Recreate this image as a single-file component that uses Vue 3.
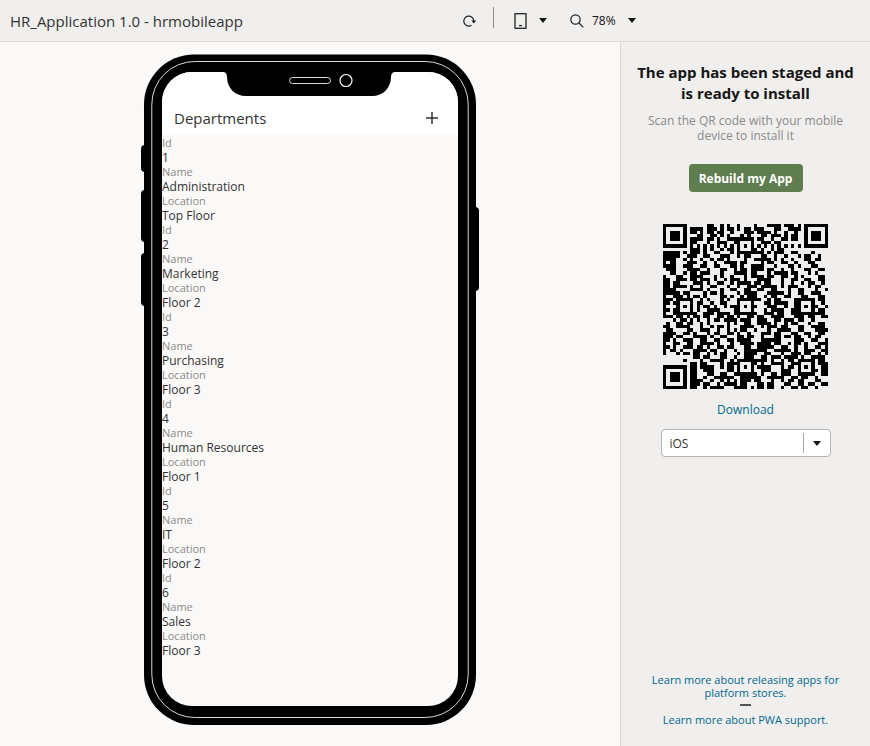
<script setup>
import { ref } from 'vue'

const departments = [
  { id: 1, name: 'Administration', location: 'Top Floor' },
  { id: 2, name: 'Marketing', location: 'Floor 2' },
  { id: 3, name: 'Purchasing', location: 'Floor 3' },
  { id: 4, name: 'Human Resources', location: 'Floor 1' },
  { id: 5, name: 'IT', location: 'Floor 2' },
  { id: 6, name: 'Sales', location: 'Floor 3' },
]

const platform = ref('iOS')

// Modules of the QR code; finder, timing and alignment patterns are added below.
const size = 49
const rows = [
  '.............##..#.#..#....#...####.###.#........',
  '........####.###.#.##.#.##.###...##..####........',
  '........##.#.##.##..#...###.####.#..#..#.........',
  '..........##..##.#.#...#.#...##.###.#.##.........',
  '........####.##.#..####..##.##..#..##.##.........',
  '........##...#..###..#.####..###.##..............',
  '.................................................',
  '........###.#.#..#.##..#.###.#..#.##.............',
  '#####...###.#..##...#.##..####.#.###..##....#....',
  '#####..###..##...###..#.##...##..#..#...#.##..#..',
  '####....#..#..#.##.#....#..#####.#.#..#...##.##..',
  '#.##...###..#..#..####.##....#.##..##..#...##....',
  '####...##..##..##...##.#..####...#...##.#...##...',
  '.###...####..#...##..#.##.####.##..#..#...##..##.',
  '..##....##.###...#...####.##...#.####.##...#.#...',
  '#...##..####...#.#..#...#.####.##..##..#.#....##.',
  '##..##..##.###.#..#.###.#...####...#..##..##..##.',
  '##.##.#..###.#..##..#.####.##.##...#..#..#.##..#.',
  '##.####.#..#..##...#..#..###.#####.#.###...#.##..',
  '####....####.#...#..##..##..##..##...#..##...#..#',
  '#####.##....#.##.#....#.####...#####.#..##..###..',
  '#..#####.##.#....##.#..#.###..#.##..##...##...##.',
  '###.#####..#.#...#.#..#######..#.##....######.##.',
  '##.######.##..#..##...####....##.####..######..#.',
  '#...#.###.#.##.#..#.###...##...###..#..#######..#',
  '##.##.###.#..####....######...#.####..#######.##.',
  '#..#######..###.####.#######..###.##..######.###.',
  '###.####.##.##..##.##.#..##.##..####...###.##..##',
  '...#.#..#.#..#.##.####.###..###..##.###.##..#....',
  '.#..##.##..#.#.....#.#..##..####.#..#.##...#..##.',
  '##..##.#...#..#.##.#...####..#.###.##...##..####.',
  '.##...###..###..#..#.#.##..#...#..####..##...####',
  '####..##.#...#.##..##.#..#...###.##...##..##..##.',
  '###.##...####.#..##...##.##..#...##.##.##..#.##..',
  '##.#..###..##..##..##.####...######....###..##..#',
  '#..##.###..####.#...#..####.####.##..#.##.#...###',
  '##.#..###.##.#..##.##...##..#####..##..#..#..##.#',
  '#.##.##..####.##..#..#..#######..#####.#..###..##',
  '#...#..#.##..#.#.##...#.####..##...#..###.##..#.#',
  '.........##.##...##..#..###..##.###.####.#..####.',
  '...........#..####..#.###..####.#..#.##..###..##.',
  '........##.##....#.####..###.#..####..######..###',
  '........##.####..#.##....##.####...#.##.....#..##',
  '........##..###....##.#.###..###...###..#.#.##.##',
  '........##...##..##..#..####.#..##.###..####...##',
  '........##..#..######..######..#####..##.##..#...',
  '........####..#..#.#.#.###.##...#..#.##.##...##..',
  '........###.##..#.####.##...##.##...##..##.##..##',
  '........##..#.####...####.#.##.##..#..##.##..#...',
]

function ring(dx, dy) {
  return Math.max(Math.abs(dx), Math.abs(dy))
}

function isDark(x, y) {
  for (const [cx, cy] of [[3, 3], [size - 4, 3], [3, size - 4]]) {
    const r = ring(x - cx, y - cy)
    if (r <= 4) return r < 2 || r === 3
  }
  for (const [cx, cy] of [[24, 6], [6, 24], [24, 24], [42, 24], [24, 42], [42, 42]]) {
    const r = ring(x - cx, y - cy)
    if (r <= 2) return r !== 1
  }
  if (x === 6 || y === 6) return (x + y) % 2 === 0
  return rows[y][x] === '#'
}

let qrPath = ''
for (let y = 0; y < size; y++) {
  for (let x = 0; x < size; x++) {
    if (isDark(x, y)) qrPath += `M${x} ${y}h1v1h-1z`
  }
}
</script>

<template>
  <div class="app">
    <header class="toolbar">
      <h1 class="title">HR_Application 1.0 - hrmobileapp</h1>
      <div class="tools">
        <button class="tool" type="button" aria-label="Reload">
          <svg width="14" height="14" viewBox="0 0 14 14" fill="none" stroke="#222" stroke-width="1.2">
            <path d="M9.500 11.300A5 5 0 1 1 11.800 7" />
            <path d="M9.400 6.400h4.800l-2.400 3z" fill="#161513" stroke="none" />
          </svg>
        </button>
        <span class="divider"></span>
        <button class="tool device" type="button" aria-label="Device">
          <svg width="13" height="16" viewBox="0 0 13 16" fill="none" stroke="#222" stroke-width="1.3">
            <rect x="1" y="0.700" width="11" height="14.600" />
            <path d="M5 12.600h3" />
          </svg>
          <svg class="caret" width="8" height="5" viewBox="0 0 8 5"><path d="M0 0h8L4 5z" /></svg>
        </button>
        <button class="tool zoom" type="button" aria-label="Zoom level">
          <svg width="14" height="14" viewBox="0 0 14 14" fill="none" stroke="#222" stroke-width="1.2">
            <circle cx="5.500" cy="5.500" r="4.700" />
            <path d="M9 9l4.300 4.300" />
          </svg>
          <span class="percent">78%</span>
          <svg class="caret" width="8" height="5" viewBox="0 0 8 5"><path d="M0 0h8L4 5z" /></svg>
        </button>
      </div>
    </header>

    <div class="body">
      <main class="stage">
        <div class="phone">
          <svg class="frame" viewBox="0 0 340 672" aria-hidden="true">
            <rect x="1" y="91" width="10" height="27" rx="4" />
            <rect x="1" y="136" width="10" height="52" rx="4" />
            <rect x="1" y="199" width="10" height="53" rx="4" />
            <rect x="329" y="153" width="10" height="84" rx="4" />
            <rect x="4" y="0.500" width="332" height="670.500" rx="50" />
            <rect x="11.800" y="7.500" width="316.400" height="656" rx="43" fill="none" stroke="#d8d8d8" stroke-width="1" />
          </svg>
          <section class="screen">
            <svg class="notch" width="170" height="24" viewBox="0 0 170 24" aria-hidden="true">
              <path d="M0 0h170q-3 1-3 5c0 11-8 19-19 19H22C11 24 3 16 3 5q0-4-3-5z" />
              <rect x="65.500" y="5.500" width="41" height="6" rx="3" fill="none" stroke="#ddd" />
              <circle cx="122" cy="8.500" r="6" fill="none" stroke="#fff" stroke-width="1.200" />
            </svg>
            <div class="screen-head">
              <h2>Departments</h2>
              <button class="add" type="button" aria-label="Add department">
                <svg width="12" height="12" viewBox="0 0 12 12" stroke="#333" stroke-width="1.500"><path d="M6 0v12M0 6h12" /></svg>
              </button>
            </div>
            <div class="records">
              <dl v-for="d in departments" :key="d.id">
                <dt>Id</dt>
                <dd>{{ d.id }}</dd>
                <dt>Name</dt>
                <dd>{{ d.name }}</dd>
                <dt>Location</dt>
                <dd>{{ d.location }}</dd>
              </dl>
            </div>
          </section>
        </div>
      </main>

      <aside class="panel">
        <h2 class="panel-title">The app has been staged and<br />is ready to install</h2>
        <p class="hint">Scan the QR code with your mobile<br />device to install it</p>
        <button class="rebuild" type="button">Rebuild my App</button>
        <svg class="qr" viewBox="0 0 49 49" role="img" aria-label="QR code"><path :d="qrPath" shape-rendering="crispEdges" /></svg>
        <a class="download" href="#">Download</a>
        <div class="picker">
          <select v-model="platform" aria-label="Platform">
            <option>iOS</option>
            <option>Android</option>
          </select>
          <span class="picker-arrow">
            <svg class="caret" width="8" height="5" viewBox="0 0 8 5"><path d="M0 0h8L4 5z" /></svg>
          </span>
        </div>
        <footer class="links">
          <a href="#">Learn more about releasing apps for<br />platform stores.</a>
          <span class="dash"></span>
          <a href="#">Learn more about PWA support.</a>
        </footer>
      </aside>
    </div>
  </div>
</template>

<style>
body {
  background: #faf9f8;
}
</style>

<style scoped>
.app {
  display: flex;
  flex-direction: column;
  min-height: 100vh;
  font-family: 'Open Sans', 'Noto Sans', sans-serif;
  font-size: 12px;
  color: #161513;
}
h1,
h2,
p,
dl,
dd {
  margin: 0;
}
button {
  border: 0;
  padding: 0;
  background: none;
  font: inherit;
  color: inherit;
  cursor: pointer;
}
a {
  color: #00688c;
  text-decoration: none;
}
.toolbar {
  display: flex;
  align-items: center;
  box-sizing: border-box;
  height: 42px;
  padding-left: 10px;
  background: #f0efee;
  border-bottom: 1px solid #d9d8d6;
}
.title {
  flex: 0 0 452px;
  font-size: 15px;
  line-height: 20px;
  font-weight: 400;
  color: #333;
  white-space: nowrap;
}
.tools {
  display: flex;
  align-items: center;
}
.tool {
  display: flex;
  align-items: center;
}
.divider {
  width: 1px;
  height: 21px;
  margin: 0 20px 6px 17px;
  background: #8b8a88;
}
.device {
  gap: 12px;
}
.zoom {
  margin-left: 23px;
}
.percent {
  margin: 0 12px 0 8px;
}
.caret {
  fill: #161513;
}
.body {
  display: flex;
  flex: 1;
}
.stage {
  flex: 1;
  display: flex;
  justify-content: center;
  align-items: flex-start;
  padding: 12px 0 20px;
  background: #faf9f8;
}
.phone {
  position: relative;
  box-sizing: border-box;
  width: 340px;
  padding: 18px 22px 20px;
}
.frame {
  position: absolute;
  inset: 0;
  width: 100%;
  height: 100%;
}
.screen {
  position: relative;
  height: 634px;
  border-radius: 30px;
  overflow: hidden;
  background: #faf9f8;
}
.notch {
  position: absolute;
  top: 0;
  left: 62px;
}
.screen-head {
  display: flex;
  justify-content: space-between;
  align-items: center;
  padding: 34px 20px 4px 12px;
  background: #fff;
}
.screen-head h2 {
  font-size: 15px;
  line-height: 24px;
  font-weight: 500;
  color: #333;
}
.add {
  display: flex;
}
.records {
  padding-top: 2px;
}
dt {
  font-size: 11px;
  line-height: 14px;
  color: #8b8a88;
}
dd {
  font-size: 12px;
  line-height: 15px;
  color: #333;
}
.panel {
  display: flex;
  flex-direction: column;
  align-items: center;
  box-sizing: border-box;
  width: 250px;
  padding: 20px 0;
  background: #f0efee;
  border-left: 1px solid #d9d8d6;
  text-align: center;
}
.panel-title {
  font-size: 15px;
  line-height: 21px;
  font-weight: 700;
  white-space: nowrap;
}
.hint {
  margin-top: 9px;
  line-height: 15px;
  color: #8b8a88;
}
.rebuild {
  width: 114px;
  height: 28px;
  margin-top: 21px;
  border-radius: 4px;
  background: #5f7d4f;
  color: #fff;
  font-weight: 700;
}
.qr {
  width: 165px;
  height: 165px;
  margin-top: 32px;
}
.download {
  margin-top: 13px;
  line-height: 16px;
}
.picker {
  position: relative;
  width: 170px;
  height: 28px;
  margin-top: 11px;
}
.picker select {
  appearance: none;
  width: 100%;
  height: 100%;
  padding: 0 36px 0 8px;
  border: 1px solid #b5b4b2;
  border-radius: 4px;
  background: #fff;
  color: #333;
  font: inherit;
}
.picker-arrow {
  position: absolute;
  top: 4px;
  right: 1px;
  display: flex;
  align-items: center;
  justify-content: center;
  width: 26px;
  height: 20px;
  border-left: 1px solid #a5a4a2;
  pointer-events: none;
}
.links {
  display: flex;
  flex-direction: column;
  align-items: center;
  margin-top: auto;
  font-size: 11px;
  line-height: 13px;
}
.dash {
  width: 11px;
  height: 2px;
  margin: 5px 0 7px;
  background: #555;
}
</style>
